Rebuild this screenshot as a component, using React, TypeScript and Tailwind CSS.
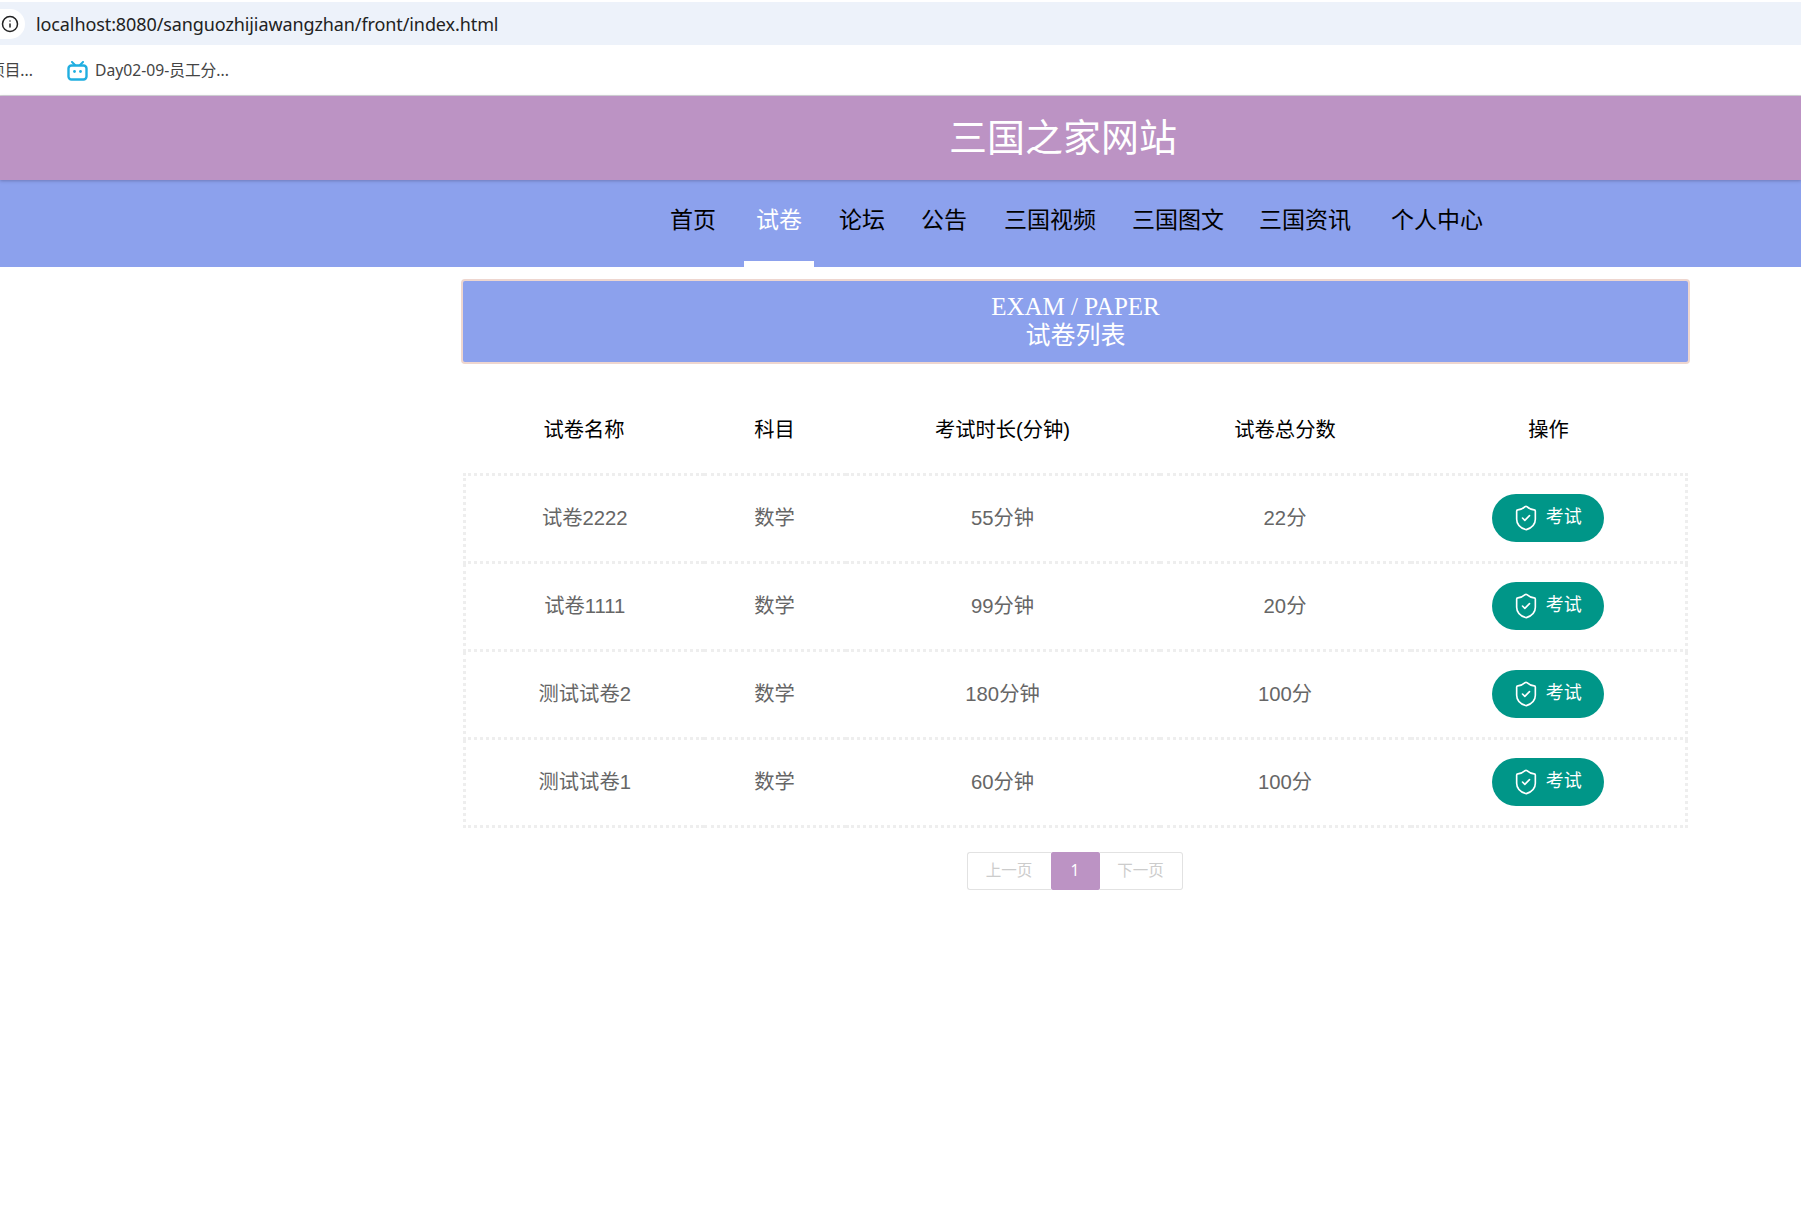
import { Info, ShieldCheck } from "lucide-react";

const rows = [
  ["试卷2222", "数学", "55分钟", "22分"],
  ["试卷1111", "数学", "99分钟", "20分"],
  ["测试试卷2", "数学", "180分钟", "100分"],
  ["测试试卷1", "数学", "60分钟", "100分"],
];

const nav = [
  { t: "首页", c: "ml-[670px] text-black" },
  { t: "试卷", c: "ml-[28px] w-[70px] justify-center border-b-[6px] border-white text-white" },
  { t: "论坛", c: "ml-[25px] text-black" },
  { t: "公告", c: "ml-[36px] text-black" },
  { t: "三国视频", c: "ml-[37px] text-black" },
  { t: "三国图文", c: "ml-[36px] text-black" },
  { t: "三国资讯", c: "ml-[35px] text-black" },
  { t: "个人中心", c: "ml-[40px] text-black" },
];

function Bili() {
  return (
    <svg width="21" height="20" viewBox="0 0 21 20" className="shrink-0">
      <path d="M5 1l3 3M16 1l-3 3" stroke="#20aee0" strokeWidth="2" strokeLinecap="round" />
      <rect x="1.5" y="4.5" width="18" height="14" rx="3" fill="none" stroke="#20aee0" strokeWidth="2.4" />
      <circle cx="7.5" cy="10.5" r="1.4" fill="#20aee0" />
      <circle cx="13.5" cy="10.5" r="1.4" fill="#20aee0" />
    </svg>
  );
}

export default function App() {
  return (
    <div className="min-h-[1215px] overflow-hidden bg-white font-['Liberation_Sans','Noto_Sans_CJK_SC',sans-serif]">
      <div className="pt-[2px]">
        <div className="flex h-[43px] items-center bg-[#edf2fa]">
          <div className="flex h-[30px] w-[25px] items-center justify-end rounded-r-full bg-white pr-[6px]">
            <Info size={18} strokeWidth={2} className="text-[#222]" />
          </div>
          <span className="ml-[11px] pt-[1px] font-['Noto_Sans','Noto_Sans_CJK_SC',sans-serif] text-[18px] tracking-[-0.1px] text-[#222]">
            localhost:8080/sanguozhijiawangzhan/front/index.html
          </span>
        </div>
      </div>
      <div className="flex h-[51px] items-center border-b border-[#d8d8d8] pt-[2px] font-['Noto_Sans','Noto_Sans_CJK_SC',sans-serif] text-[15.7px] text-[#444]">
        <span className="-ml-[11px] whitespace-nowrap">项目...</span>
        <span className="ml-[34px] flex items-center gap-[7px]">
          <Bili />
          <span>Day02-09-员工分...</span>
        </span>
      </div>
      <div className="relative z-10 flex h-[84px] items-center justify-center bg-[#bc93c4] shadow-[0_1px_3px_rgba(70,70,120,0.45)]">
        <h1 className="ml-[325px] text-[38px] font-normal text-white">三国之家网站</h1>
      </div>
      <nav className="flex h-[87px] bg-[#8ca1ed] text-[23px]">
        {nav.map((n) => (
          <div key={n.t} className={`flex h-full items-start pt-[21px] leading-[38px] ${n.c}`}>
            {n.t}
          </div>
        ))}
      </nav>
      <main className="ml-[461px] w-[1229px] pt-[12px]">
        <div className="flex h-[85px] flex-col items-center justify-center rounded-[4px] border-2 border-[#eed6cf] bg-[#8ca1ed] text-white">
          <div className="-mt-[3px] font-['Liberation_Serif','Noto_Sans_CJK_SC',serif] text-[25px] leading-[29px]">EXAM / PAPER</div>
          <div className="text-[25px] font-normal leading-[28px]">试卷列表</div>
        </div>
        <table className="mt-[22px] ml-[2px] w-[1222px] table-fixed border-collapse text-[20.3px]">
          <colgroup>
            <col className="w-[239px]" />
            <col className="w-[142px]" />
            <col className="w-[314px]" />
            <col className="w-[251px]" />
            <col className="w-[276px]" />
          </colgroup>
          <thead>
            <tr className="h-[88px] text-black">
              {["试卷名称", "科目", "考试时长(分钟)", "试卷总分数", "操作"].map((h) => (
                <th key={h} className="pt-[2px] text-center font-normal">
                  {h}
                </th>
              ))}
            </tr>
          </thead>
          <tbody>
            {rows.map((r) => (
              <tr key={r[0]} className="h-[88px] text-[#666]">
                {r.map((c, i) => (
                  <td
                    key={i}
                    className={`border-y-[3px] border-dotted border-[#eee] text-center ${i === 0 ? "border-l-[3px]" : ""}`}
                  >
                    {c}
                  </td>
                ))}
                <td className="border-y-[3px] border-r-[3px] border-dotted border-[#eee] text-center">
                  <button className="inline-flex h-[48px] w-[112px] items-center justify-start gap-[6px] rounded-full bg-[#009688] pl-[20px] text-[18px] text-white">
                    <ShieldCheck size={28} strokeWidth={1.4} />
                    <span className="-mt-[2px]">考试</span>
                  </button>
                </td>
              </tr>
            ))}
          </tbody>
        </table>
        <div className="mt-[24px] flex justify-center pr-[2px] text-[15.5px]">
          <div className="flex h-[38px] items-center">
            <span className="flex h-[38px] w-[84px] items-center justify-center rounded-l-[3px] border border-r-0 border-[#e2e2e2] text-[#ccc]">上一页</span>
            <span className="flex h-[38px] w-[49px] items-center justify-center rounded-[2px] bg-[#bc93c4] font-sans text-white">1</span>
            <span className="flex h-[38px] w-[83px] items-center justify-center rounded-r-[3px] border border-l-0 border-[#e2e2e2] text-[#ccc]">下一页</span>
          </div>
        </div>
      </main>
    </div>
  );
}
